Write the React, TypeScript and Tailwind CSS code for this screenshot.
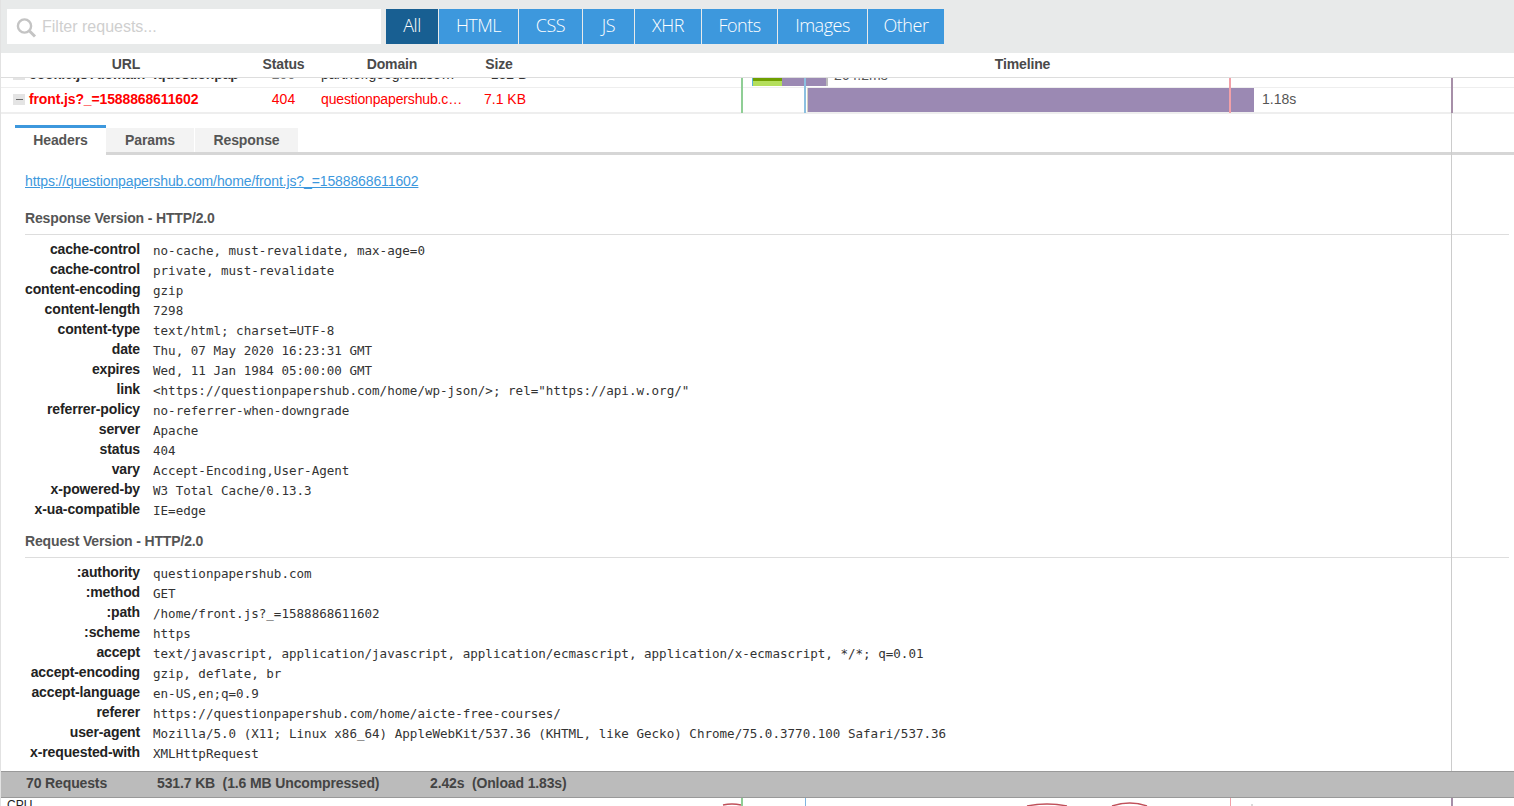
const filters = [
  { label: "All", w: "w-[52px]", active: true },
  { label: "HTML", w: "w-[79px]", active: false },
  { label: "CSS", w: "w-[63px]", active: false },
  { label: "JS", w: "w-[51px]", active: false },
  { label: "XHR", w: "w-[66px]", active: false },
  { label: "Fonts", w: "w-[75px]", active: false },
  { label: "Images", w: "w-[89px]", active: false },
  { label: "Other", w: "w-[76px]", active: false },
];

const responseHeaders: [string, string][] = [
  ["cache-control", "no-cache, must-revalidate, max-age=0"],
  ["cache-control", "private, must-revalidate"],
  ["content-encoding", "gzip"],
  ["content-length", "7298"],
  ["content-type", "text/html; charset=UTF-8"],
  ["date", "Thu, 07 May 2020 16:23:31 GMT"],
  ["expires", "Wed, 11 Jan 1984 05:00:00 GMT"],
  ["link", '<https://questionpapershub.com/home/wp-json/>; rel="https://api.w.org/"'],
  ["referrer-policy", "no-referrer-when-downgrade"],
  ["server", "Apache"],
  ["status", "404"],
  ["vary", "Accept-Encoding,User-Agent"],
  ["x-powered-by", "W3 Total Cache/0.13.3"],
  ["x-ua-compatible", "IE=edge"],
];

const requestHeaders: [string, string][] = [
  [":authority", "questionpapershub.com"],
  [":method", "GET"],
  [":path", "/home/front.js?_=1588868611602"],
  [":scheme", "https"],
  ["accept", "text/javascript, application/javascript, application/ecmascript, application/x-ecmascript, */*; q=0.01"],
  ["accept-encoding", "gzip, deflate, br"],
  ["accept-language", "en-US,en;q=0.9"],
  ["referer", "https://questionpapershub.com/home/aicte-free-courses/"],
  ["user-agent", "Mozilla/5.0 (X11; Linux x86_64) AppleWebKit/537.36 (KHTML, like Gecko) Chrome/75.0.3770.100 Safari/537.36"],
  ["x-requested-with", "XMLHttpRequest"],
];

function HeaderRows({ rows }: { rows: [string, string][] }) {
  return (
    <div className="mt-[5px]">
      {rows.map(([k, v], i) => (
        <div key={i} className="flex h-[20px] items-center">
          <div className="w-[115px] shrink-0 whitespace-nowrap pb-[2px] text-right text-[14px] font-bold leading-[18px] tracking-[-0.13px] text-[#222]">{k}</div>
          <div className="ml-[13px] whitespace-pre pt-[2px] font-['DejaVu_Sans_Mono',monospace] text-[12.55px] text-[#333]">{v}</div>
        </div>
      ))}
    </div>
  );
}

function Section({ title, rows }: { title: string; rows: [string, string][] }) {
  return (
    <div>
      <div className="mr-[5px] h-[25px] border-b border-[#ddd] text-[14px] font-bold leading-[16px] tracking-[-0.15px] text-[#555]">{title}</div>
      <HeaderRows rows={rows} />
    </div>
  );
}

export default function App() {
  return (
    <div className="relative h-[806px] w-[1514px] overflow-hidden border-l border-[#e2e2e2] bg-white font-['Liberation_Sans',Arial,sans-serif]">
      {/* Toolbar */}
      <div className="flex h-[53px] items-start bg-[#e8eaea] pl-[6px] pt-[9px]">
        <div className="flex h-[35px] w-[374px] items-center bg-white">
          <svg width="22" height="22" viewBox="0 0 22 22" className="ml-[8px]" fill="none" stroke="#c4c4c4">
            <circle cx="9.5" cy="10" r="6.6" strokeWidth="2.4" />
            <path d="M14.5 15l5.5 5.5" strokeWidth="3" />
          </svg>
          <span className="ml-[5px] text-[16px] text-[#cfcfcf]">Filter requests...</span>
        </div>
        <div className="ml-[5px] flex gap-px">
          {filters.map((f) => (
            <div
              key={f.label}
              className={`flex h-[35px] items-center justify-center pb-[2px] font-['Open_Sans',sans-serif] text-[18px] font-light tracking-[-0.5px] text-white ${f.w} ${f.active ? "bg-[#185f92]" : "bg-[#3d98dd]"}`}
            >
              {f.label}
            </div>
          ))}
        </div>
      </div>

      {/* Table header */}
      <div className="flex h-[25px] items-center border-b border-[#ddd] pb-[2px] text-[14px] font-bold tracking-[-0.13px] text-[#4a4a4a]">
        <div className="w-[249px] pl-[1px] text-center">URL</div>
        <div className="w-[67px] text-center">Status</div>
        <div className="w-[150px] text-center">Domain</div>
        <div className="w-[64px] text-center">Size</div>
        <div className="flex-1 text-center">Timeline</div>
      </div>

      {/* Rows */}
      <div className="h-[36px] overflow-hidden">
        <div className="-mt-[15px] flex h-[25px] items-center border-b border-[#eee] pb-[2px] text-[14px] text-[#333]">
          <div className="flex w-[249px] items-center pl-[12px]">
            <span className="h-[11px] w-[12px] bg-[#e4e4e4]" />
            <span className="ml-[4px] w-[211px] overflow-hidden whitespace-nowrap font-bold tracking-[-0.13px]">cookie.js?domain=.questionpapershub.com</span>
          </div>
          <div className="w-[67px] text-center text-[#777]">200</div>
          <div className="w-[150px] truncate pl-[4px] pr-[9px]">partner.googleadservices.com</div>
          <div className="w-[64px] pl-[20px] text-center">132 B</div>
          <div className="relative h-[24px] flex-1">
            <div className="absolute left-[221px] top-0 flex h-[24px] w-[76px] items-stretch border-l border-r-2 border-l-[#5cb3d6] border-r-[#bbb]">
              <div className="flex w-[29px] flex-col">
                <div className="flex-1 bg-[#6f9f00]" />
                <div className="h-[5px] bg-[#b4df5c]" />
              </div>
              <div className="flex-1 bg-[#9b89b3]" />
            </div>
            <span className="absolute left-[303px] top-[3px] text-[14px] text-[#555]">264.2ms</span>
          </div>
        </div>
        <div className="flex h-[26px] items-center border-b-2 border-[#eee] pb-[2px] text-[14px] text-[#f00]">
          <div className="flex w-[249px] items-center pl-[12px]">
            <span className="flex h-[11px] w-[12px] items-center justify-center bg-[#e4e4e4]">
              <span className="h-px w-[7px] bg-[#666]" />
            </span>
            <span className="ml-[4px] font-bold tracking-[-0.13px]">front.js?_=1588868611602</span>
          </div>
          <div className="w-[67px] text-center">404</div>
          <div className="w-[150px] truncate pl-[4px] pr-[3px] tracking-[-0.15px]">questionpapershub.com</div>
          <div className="w-[64px] pl-[12px] text-center">7.1 KB</div>
          <div className="relative h-full flex-1">
            <div className="absolute left-[276px] top-0 h-[24px] w-[447px] border-l border-[#d8d0c0] bg-[#9b89b3]" />
            <span className="absolute left-[731px] top-[1px] text-[14px] text-[#555]">1.18s</span>
          </div>
        </div>
      </div>

      {/* Tabs */}
      <div className="ml-[14px] mt-[11px] flex h-[27px] items-stretch text-[14px] font-bold tracking-[-0.1px] text-[#555]">
        <div className="flex w-[91px] items-center justify-center border-t-[3px] border-[#3d98dd] bg-white">Headers</div>
        <div className="mt-[3px] flex w-[88px] items-center justify-center bg-[#f3f3f3]">Params</div>
        <div className="ml-px mt-[3px] flex w-[103px] items-center justify-center bg-[#f3f3f3]">Response</div>
      </div>
      <div className="ml-[105px] h-[3px] bg-[#d6d6d6]" />

      {/* Details */}
      <div className="relative pl-[24px]">
        <div className="mt-[18px] h-[20px] text-[14px] leading-[16px] tracking-[-0.115px] text-[#3d98dd] underline">
          https://questionpapershub.com/home/front.js?_=1588868611602
        </div>
        <div className="mt-[17px]">
          <Section title="Response Version - HTTP/2.0" rows={responseHeaders} />
        </div>
        <div className="mt-[13px]">
          <Section title="Request Version - HTTP/2.0" rows={requestHeaders} />
        </div>
      </div>

      {/* Summary */}
      <div className="absolute left-0 right-0 top-[771px] z-10 flex h-[27px] items-center border-y border-[#999] bg-[#bbb] pb-[2px] text-[14px] font-bold tracking-[-0.13px] text-[#444]">
        <span className="ml-[25px] w-[131px]">70 Requests</span>
        <span className="w-[273px]">531.7 KB&nbsp; (1.6 MB Uncompressed)</span>
        <span>2.42s&nbsp; (Onload 1.83s)</span>
      </div>

      {/* Cut off panel below the summary */}
      <span className="absolute left-[6px] top-[798px] text-[12px] leading-[14px] text-[#222]">CPU</span>
      <svg className="absolute left-[699px] top-[798px]" width="600" height="8" fill="none" stroke="#c0505a" strokeWidth="1.5">
        <path d="M23 7Q32 5 41 7" />
        <path d="M327 8Q347 4 367 8" />
        <path d="M412 8Q430 2 447 8" />
        <circle cx="552" cy="7" r="1" fill="#ccc" stroke="none" />
      </svg>

      {/* Timeline markers over the rows */}
      <div className="absolute left-[740px] top-[78px] h-[35px] w-[2px] bg-[#8fce95]" />
      <div className="absolute left-[803px] top-[78px] h-[35px] w-[2px] bg-[#8cc0e0]" />
      <div className="absolute left-[1228px] top-[78px] h-[35px] w-[2px] bg-[#f2a0a8]" />
      <div className="absolute left-[1450px] top-[78px] h-[35px] w-[2px] bg-[#a68fa8]" />
      <div className="absolute left-[1450px] top-[113px] h-[658px] w-px bg-[#ccc]" />
      <div className="absolute left-[740px] top-[798px] h-[8px] w-[2px] bg-[#8fce95]" />
      <div className="absolute left-[804px] top-[798px] h-[8px] w-px bg-[#7fb5e0]" />
      <div className="absolute left-[1229px] top-[798px] h-[8px] w-px bg-[#f2a0a8]" />
      <div className="absolute left-[1450px] top-[798px] h-[8px] w-[2px] bg-[#a68fa8]" />
    </div>
  );
}
